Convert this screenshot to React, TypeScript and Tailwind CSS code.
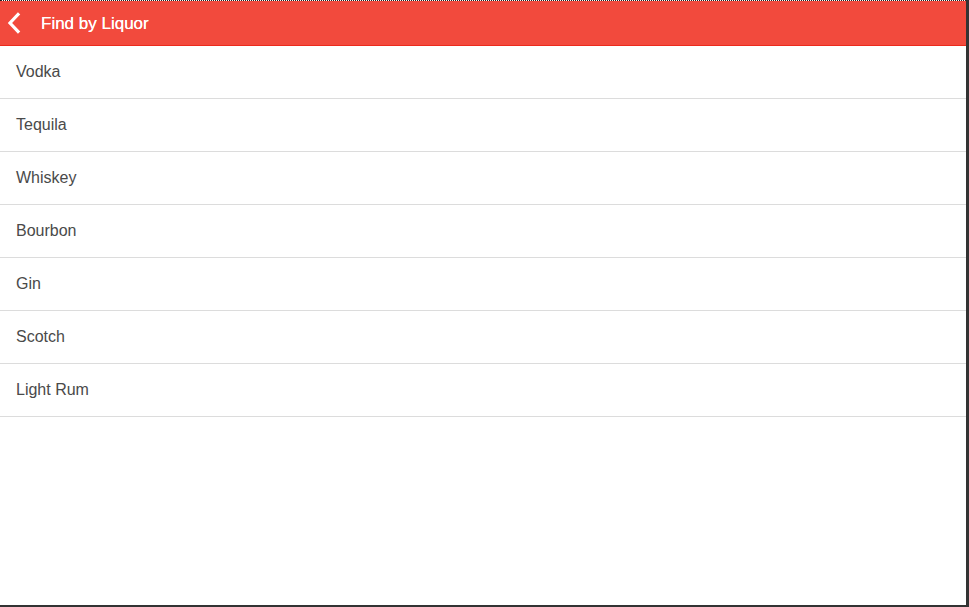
import { type FC } from 'react';

const LIQUORS = ['Vodka', 'Tequila', 'Whiskey', 'Bourbon', 'Gin', 'Scotch', 'Light Rum'];

const App: FC = () => {
  return (
    <div
      className="w-[969px] h-[607px] flex flex-col bg-white border-r-[3px] border-r-[#333] border-b-2 border-b-[#333] overflow-hidden"
      style={{ fontFamily: '"Liberation Sans", Arial, sans-serif' }}
    >
      {/* dotted window edge along the top */}
      <div className="h-px shrink-0 border-t border-dotted border-[#222]" />

      <header className="h-[45px] shrink-0 flex items-center bg-[#f24a3d] border-b border-b-[#ec2a1c]">
        <button type="button" className="w-[41px] h-full flex items-center justify-start pl-[7px]" aria-label="Back">
          <svg width="14" height="22" viewBox="0 0 14 22" fill="none">
            <path d="M11 2.5 L3 11 L11 19.5" stroke="#fff" strokeWidth="3.2" strokeLinecap="square" />
          </svg>
        </button>
        <h1 className="text-white text-[17px] font-medium leading-none [text-shadow:0_0_0.4px_#fff]">Find by Liquor</h1>
      </header>

      <ul className="flex flex-col">
        {LIQUORS.map((name) => (
          <li
            key={name}
            className="h-[53px] flex items-center px-4 text-[16px] text-[#4a4a4a] border-b border-b-[#dcdcdc]"
          >
            {name}
          </li>
        ))}
      </ul>
    </div>
  );
};

export default App;
